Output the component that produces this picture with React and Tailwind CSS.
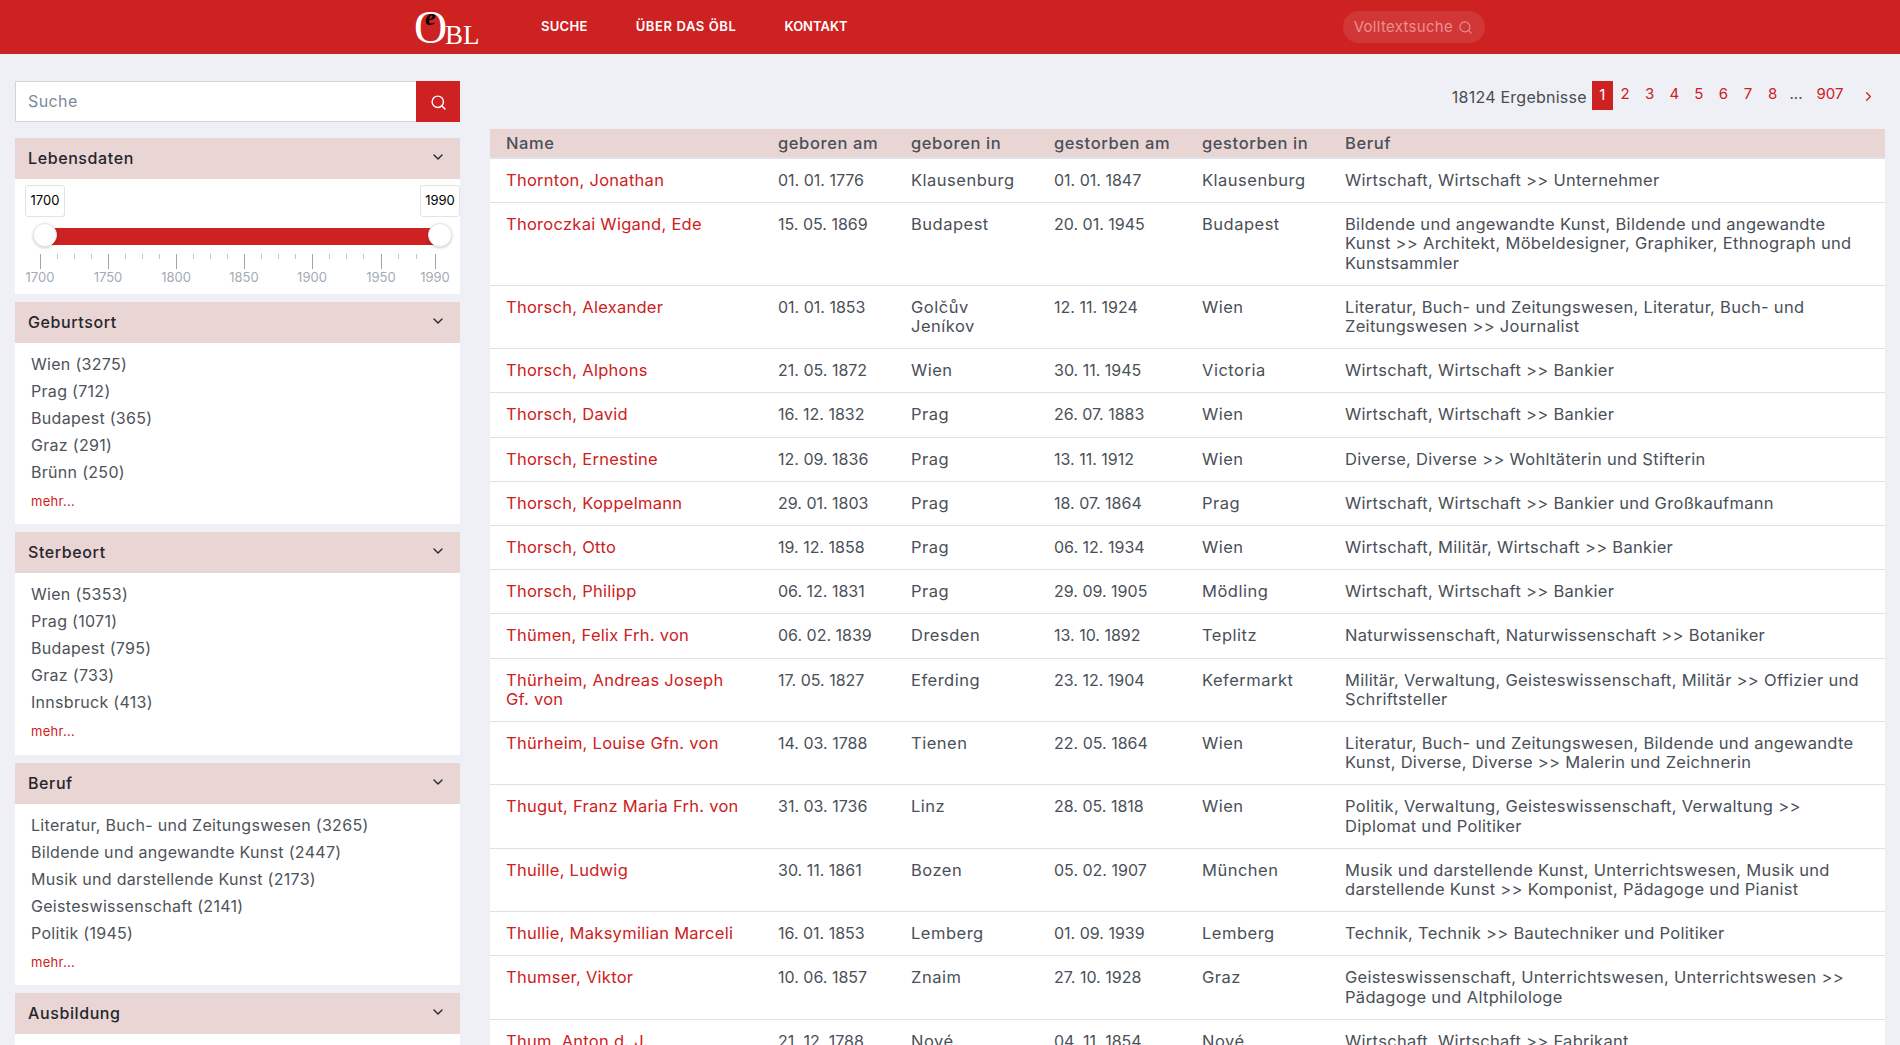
import { ChevronDown, ChevronRight, Search } from "lucide-react";

const rows = [
  ["Thornton, Jonathan", "01. 01. 1776", "Klausenburg", "01. 01. 1847", "Klausenburg", "Wirtschaft, Wirtschaft >> Unternehmer"],
  ["Thoroczkai Wigand, Ede", "15. 05. 1869", "Budapest", "20. 01. 1945", "Budapest", "Bildende und angewandte Kunst, Bildende und angewandte\nKunst >> Architekt, Möbeldesigner, Graphiker, Ethnograph und\nKunstsammler"],
  ["Thorsch, Alexander", "01. 01. 1853", "Golčův\nJeníkov", "12. 11. 1924", "Wien", "Literatur, Buch- und Zeitungswesen, Literatur, Buch- und\nZeitungswesen >> Journalist"],
  ["Thorsch, Alphons", "21. 05. 1872", "Wien", "30. 11. 1945", "Victoria", "Wirtschaft, Wirtschaft >> Bankier"],
  ["Thorsch, David", "16. 12. 1832", "Prag", "26. 07. 1883", "Wien", "Wirtschaft, Wirtschaft >> Bankier"],
  ["Thorsch, Ernestine", "12. 09. 1836", "Prag", "13. 11. 1912", "Wien", "Diverse, Diverse >> Wohltäterin und Stifterin"],
  ["Thorsch, Koppelmann", "29. 01. 1803", "Prag", "18. 07. 1864", "Prag", "Wirtschaft, Wirtschaft >> Bankier und Großkaufmann"],
  ["Thorsch, Otto", "19. 12. 1858", "Prag", "06. 12. 1934", "Wien", "Wirtschaft, Militär, Wirtschaft >> Bankier"],
  ["Thorsch, Philipp", "06. 12. 1831", "Prag", "29. 09. 1905", "Mödling", "Wirtschaft, Wirtschaft >> Bankier"],
  ["Thümen, Felix Frh. von", "06. 02. 1839", "Dresden", "13. 10. 1892", "Teplitz", "Naturwissenschaft, Naturwissenschaft >> Botaniker"],
  ["Thürheim, Andreas Joseph\nGf. von", "17. 05. 1827", "Eferding", "23. 12. 1904", "Kefermarkt", "Militär, Verwaltung, Geisteswissenschaft, Militär >> Offizier und\nSchriftsteller"],
  ["Thürheim, Louise Gfn. von", "14. 03. 1788", "Tienen", "22. 05. 1864", "Wien", "Literatur, Buch- und Zeitungswesen, Bildende und angewandte\nKunst, Diverse, Diverse >> Malerin und Zeichnerin"],
  ["Thugut, Franz Maria Frh. von", "31. 03. 1736", "Linz", "28. 05. 1818", "Wien", "Politik, Verwaltung, Geisteswissenschaft, Verwaltung >>\nDiplomat und Politiker"],
  ["Thuille, Ludwig", "30. 11. 1861", "Bozen", "05. 02. 1907", "München", "Musik und darstellende Kunst, Unterrichtswesen, Musik und\ndarstellende Kunst >> Komponist, Pädagoge und Pianist"],
  ["Thullie, Maksymilian Marceli", "16. 01. 1853", "Lemberg", "01. 09. 1939", "Lemberg", "Technik, Technik >> Bautechniker und Politiker"],
  ["Thumser, Viktor", "10. 06. 1857", "Znaim", "27. 10. 1928", "Graz", "Geisteswissenschaft, Unterrichtswesen, Unterrichtswesen >>\nPädagoge und Altphilologe"],
  ["Thum, Anton d. J.", "21. 12. 1788", "Nové", "04. 11. 1854", "Nové", "Wirtschaft, Wirtschaft >> Fabrikant"],
];

const filters = [
  { title: "Geburtsort", body: "h-[181px]", items: ["Wien (3275)", "Prag (712)", "Budapest (365)", "Graz (291)", "Brünn (250)"] },
  { title: "Sterbeort", body: "h-[182px]", items: ["Wien (5353)", "Prag (1071)", "Budapest (795)", "Graz (733)", "Innsbruck (413)"] },
  { title: "Beruf", body: "h-[181px]", items: ["Literatur, Buch- und Zeitungswesen (3265)", "Bildende und angewandte Kunst (2447)", "Musik und darstellende Kunst (2173)", "Geisteswissenschaft (2141)", "Politik (1945)"] },
];

const pages = ["2", "3", "4", "5", "6", "7", "8"];
const bigTicks = [
  { x: 40, label: "1700" },
  { x: 108, label: "1750" },
  { x: 176, label: "1800" },
  { x: 244, label: "1850" },
  { x: 312, label: "1900" },
  { x: 381, label: "1950" },
  { x: 435, label: "1990" },
];
const smallTicks = [57, 74, 91, 125, 142, 159, 193, 210, 227, 261, 278, 295, 329, 346, 363, 398, 416];

const FilterHeader = ({ title }) => (
  <div className="h-[41px] bg-[#ead5d5] flex items-center justify-between pl-[13px] pr-[14px] text-[16px] font-medium tracking-[0.6px] text-[#23272b]">
    <span className="-mt-[1px]">{title}</span>
    <ChevronDown size={16} strokeWidth={2} className="mb-[3px]" />
  </div>
);

const Slider = () => (
  <div className="relative h-[115px] bg-white">
    <div className="absolute left-[10px] top-[6px] w-[40px] h-[32px] bg-white border border-[#e3e3e3] rounded-[3px] flex items-center justify-center text-[13px] text-black">1700</div>
    <div className="absolute right-0 top-[6px] w-[40px] h-[32px] bg-white border border-[#e3e3e3] rounded-[3px] flex items-center justify-center text-[13px] text-black">1990</div>
    <div className="absolute left-[30px] right-[20px] top-[49px] h-[17px] bg-[#cd2122]" />
    <div className="absolute left-[18px] top-[44px] w-[24px] h-[24px] rounded-full bg-white border border-[#e5e5e5] shadow-[0_1px_3px_rgba(0,0,0,0.2)]" />
    <div className="absolute left-[413px] top-[44px] w-[24px] h-[24px] rounded-full bg-white border border-[#e5e5e5] shadow-[0_1px_3px_rgba(0,0,0,0.2)]" />
    {smallTicks.map((x) => (
      <div key={x} className="absolute top-[75px] w-px h-[5px] bg-[#c4c4c4]" style={{ left: x - 15 }} />
    ))}
    {bigTicks.map((t) => (
      <div key={t.x} className="absolute top-[75px] w-px h-[15px] bg-[#a4a4a4]" style={{ left: t.x - 15 }} />
    ))}
    {bigTicks.map((t) => (
      <span key={t.label} className="absolute top-[89px] -translate-x-1/2 text-[13px] text-[#a3abb5]" style={{ left: t.x - 15 }}>
        {t.label}
      </span>
    ))}
  </div>
);

const Sidebar = () => (
  <aside className="w-[445px] shrink-0 flex flex-col gap-2">
    <div className="flex h-[41px] mb-2">
      <input
        placeholder="Suche"
        className="flex-1 min-w-0 bg-white border border-[#ced4da] border-r-0 pl-[12px] pb-[2px] text-[16px] tracking-[0.4px] text-[#4a5058] placeholder:text-[#7b8a9a] outline-none"
      />
      <div className="w-[44px] bg-[#cd2122] flex items-center justify-center text-white">
        <Search size={17} strokeWidth={2} className="mt-[2px]" />
      </div>
    </div>
    <div>
      <FilterHeader title="Lebensdaten" />
      <Slider />
    </div>
    {filters.map((f) => (
      <div key={f.title}>
        <FilterHeader title={f.title} />
        <div className={"bg-white pt-[8px] pl-[16px] " + f.body}>
          {f.items.map((item) => (
            <div key={item} className="h-[27px] leading-[27px] text-[16px] tracking-[0.3px] text-[#4d5359]">{item}</div>
          ))}
          <div className="mt-[2px] text-[13px] tracking-[0.3px] leading-[26px] text-[#cd2122]">mehr...</div>
        </div>
      </div>
    ))}
    <div>
      <FilterHeader title="Ausbildung" />
      <div className="bg-white h-[40px]" />
    </div>
  </aside>
);

const Pagination = () => (
  <div className="h-[48px] flex items-start justify-end pr-[11px] text-[16px]">
    <span className="text-[#474c52] mr-[5px] mt-[4px] tracking-[0.25px]">18124 Ergebnisse</span>
    <span className="w-[21px] h-[29px] bg-[#cd2122] text-white text-[15px] flex items-center justify-center">1</span>
    <div className="flex items-center h-[27px] text-[15px] text-[#cd2122]">
      {pages.map((p) => (
        <span key={p} className="w-[24.6px] text-center">{p}</span>
      ))}
      <span className="w-[22px] text-center text-[#4a5058]">...</span>
      <span className="w-[46px] text-center">907</span>
      <ChevronRight size={15} strokeWidth={2} className="ml-[8px] mr-[-2px] mt-[4px]" />
    </div>
  </div>
);

const ResultTable = () => (
  <table className="w-full table-fixed border-collapse text-[16px] leading-[19.2px] text-[#4a5058]">
    <colgroup>
      <col className="w-[288px]" />
      <col className="w-[133px]" />
      <col className="w-[143px]" />
      <col className="w-[148px]" />
      <col className="w-[143px]" />
      <col />
    </colgroup>
    <thead>
      <tr className="h-[29px] bg-[#ead5d5] border-b-2 border-[#dee2e6]">
        {["Name", "geboren am", "geboren in", "gestorben am", "gestorben in", "Beruf"].map((h, i) => (
          <th key={h} className={"text-left pt-[2px] font-medium tracking-[0.6px] text-[16.5px] whitespace-nowrap " + (i === 0 ? "pl-4" : "")}>{h}</th>
        ))}
      </tr>
    </thead>
    <tbody className="bg-white">
      {rows.map((r) => (
        <tr key={r[0]} className="border-b border-[#dee2e6]">
          <td className="pl-4 py-3 align-top whitespace-pre-line text-[16.5px] tracking-[0.27px] text-[#cd2122]">{r[0]}</td>
          <td className="py-3 align-top">{r[1]}</td>
          <td className="py-3 align-top whitespace-pre-line text-[16.5px] tracking-[0.5px]">{r[2]}</td>
          <td className="py-3 align-top">{r[3]}</td>
          <td className="py-3 align-top whitespace-pre-line text-[16.5px] tracking-[0.5px]">{r[4]}</td>
          <td className="py-3 align-top whitespace-pre-line text-[16.5px] tracking-[0.3px]">{r[5]}</td>
        </tr>
      ))}
    </tbody>
  </table>
);

export default function App() {
  return (
    <div className="h-screen overflow-hidden bg-[#eff0f6] font-['Inter','Liberation_Sans',sans-serif]">
      <header className="h-[54px] bg-[#cd2122] flex items-center">
        <div className="relative w-[64px] h-[40px] ml-[414px] mr-[63px] font-['Liberation_Serif',serif] text-white leading-none">
          <span className="absolute left-0 top-[-2px] text-[46px]">O</span>
          <span className="absolute left-[11px] top-[-2px] text-[24px] font-bold italic text-black">e</span>
          <span className="absolute left-[31px] top-[15px] text-[27px]">BL</span>
        </div>
        <nav className="flex gap-[48px] text-[13px] font-semibold text-white -mt-[1px]">
          <span className="tracking-[0.3px]">SUCHE</span>
          <span className="tracking-[0.6px]">ÜBER DAS ÖBL</span>
          <span>KONTAKT</span>
        </nav>
        <div className="ml-[495px] w-[142px] h-[32px] rounded-full bg-white/10 flex items-center pl-[11px] gap-[5px] text-[15px] tracking-[0.3px] text-[#ea8f8f]">
          <span>Volltextsuche</span>
          <Search size={15} strokeWidth={1.75} />
        </div>
      </header>
      <div className="flex pl-[15px] pr-[15px] pt-[27px] gap-[30px]">
        <Sidebar />
        <main className="flex-1 min-w-0">
          <Pagination />
          <ResultTable />
        </main>
      </div>
    </div>
  );
}
